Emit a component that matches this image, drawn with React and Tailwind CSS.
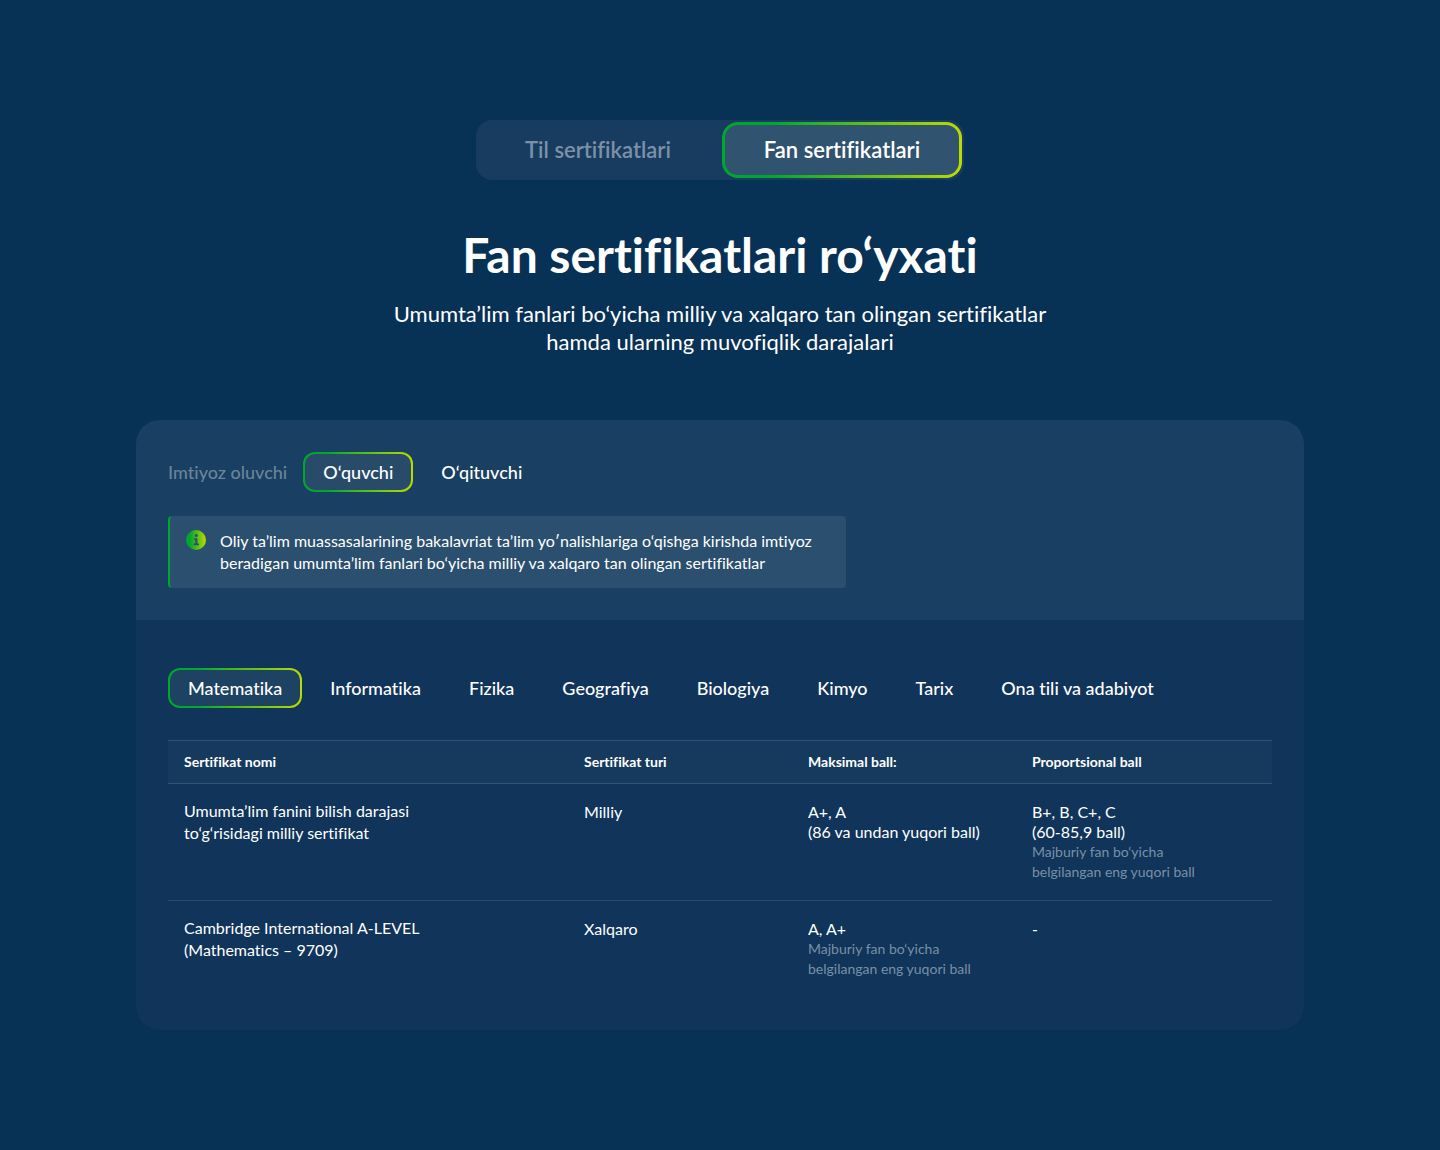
import { useState } from "react";

const kinds = ["Til sertifikatlari", "Fan sertifikatlari"];
const audiences = ["O‘quvchi", "O‘qituvchi"];
const subjects = [
  "Matematika",
  "Informatika",
  "Fizika",
  "Geografiya",
  "Biologiya",
  "Kimyo",
  "Tarix",
  "Ona tili va adabiyot",
];

const note = ["Majburiy fan bo‘yicha", "belgilangan eng yuqori ball"];

const rows = [
  {
    name: ["Umumta’lim fanini bilish darajasi", "to‘g‘risidagi milliy sertifikat"],
    type: "Milliy",
    max: { lines: ["A+, A", "(86 va undan yuqori ball)"], note: [] },
    prop: { lines: ["B+, B, C+, C", "(60-85,9 ball)"], note },
  },
  {
    name: ["Cambridge International A-LEVEL", "(Mathematics – 9709)"],
    type: "Xalqaro",
    max: { lines: ["A, A+"], note },
    prop: { lines: ["-"], note: [] },
  },
];

function Pill({ active, fill, onClick, children }) {
  const look = active
    ? `border-transparent ${fill}`
    : "border-transparent";
  return (
    <button
      type="button"
      aria-pressed={active}
      onClick={onClick}
      className={`h-10 rounded-xl border-2 px-[18px] text-lg font-medium leading-5 whitespace-nowrap ${look}`}
    >
      {children}
    </button>
  );
}

function Score({ value }) {
  return (
    <td className="px-4 py-[18px] align-top">
      {value.lines.map((line) => (
        <div key={line} className="text-base leading-5">{line}</div>
      ))}
      {value.note.map((line) => (
        <div key={line} className="text-sm leading-5 text-[#7890a6]">{line}</div>
      ))}
    </td>
  );
}

export default function App() {
  const [kind, setKind] = useState(kinds[1]);
  const [audience, setAudience] = useState(audiences[0]);
  const [subject, setSubject] = useState(subjects[0]);

  return (
    <main className="min-h-screen bg-[#073155] px-6 py-[120px] font-['Lato','Open_Sans',sans-serif] text-white antialiased [font-variant-ligatures:none]">
      <div className="mx-auto flex max-w-[1168px] flex-col items-center">
        <div className="flex gap-1 rounded-2xl bg-[#183c60] p-0.5">
          {kinds.map((item) => (
            <button
              key={item}
              type="button"
              aria-pressed={item === kind}
              onClick={() => setKind(item)}
              className={`h-14 w-60 rounded-2xl border-[3px] border-transparent text-[22px] leading-7 font-semibold ${
                item === kind
                  ? "[background:linear-gradient(#30536f,#30536f)_padding-box,linear-gradient(90deg,#00a62f_20%,#bcdb00)_border-box]"
                  : "text-[#7c91a7]"
              }`}
            >
              {item}
            </button>
          ))}
        </div>

        <h1 className="mt-12 text-center text-5xl leading-[54px] font-bold">Fan sertifikatlari ro‘yxati</h1>
        <p className="mt-[18px] text-center text-[22px] leading-7">
          Umumta’lim fanlari bo‘yicha milliy va xalqaro tan olingan sertifikatlar
          <br />
          hamda ularning muvofiqlik darajalari
        </p>

        <section className="mt-16 w-full overflow-hidden rounded-3xl bg-[#10345a]">
          <div className="bg-[#193f62] p-8">
            <div className="flex items-center gap-2">
              <span className="mr-2 text-lg leading-5 font-medium text-[#6b849b]">Imtiyoz oluvchi</span>
              {audiences.map((item) => (
                <Pill
                  key={item}
                  active={item === audience}
                  onClick={() => setAudience(item)}
                  fill="[background:linear-gradient(#284b6a,#284b6a)_padding-box,linear-gradient(90deg,#00a62f_20%,#bcdb00)_border-box]"
                >
                  {item}
                </Pill>
              ))}
            </div>
            <div className="mt-6 flex w-[678px] max-w-full gap-3.5 rounded border-l-2 border-[#00a62f] bg-[#2b4f6e] py-3.5 pr-5 pl-4">
              <svg viewBox="0 0 20 20" className="size-5 shrink-0" aria-hidden="true">
                <defs>
                  <linearGradient id="info" x1="0" x2="1" y1="0" y2="0">
                    <stop offset="0.2" stopColor="#00a62f" />
                    <stop offset="1" stopColor="#bcdb00" />
                  </linearGradient>
                </defs>
                <circle cx="10" cy="10" r="10" fill="url(#info)" />
                <circle cx="10.3" cy="5.4" r="1.5" fill="#2b4f6e" />
                <path d="M8 8.2h3.4v5.2h1.5v1.8H7.6v-1.8h1.7V9.9H8z" fill="#2b4f6e" />
              </svg>
              <p className="text-base leading-[22px]">
                Oliy ta’lim muassasalarining bakalavriat ta’lim yo′nalishlariga o‘qishga kirishda imtiyoz
                beradigan umumta’lim fanlari bo‘yicha milliy va xalqaro tan olingan sertifikatlar
              </p>
            </div>
          </div>

          <div className="px-8 pt-12 pb-[33px]">
            <div className="flex flex-wrap gap-2">
              {subjects.map((item) => (
                <Pill
                  key={item}
                  active={item === subject}
                  onClick={() => setSubject(item)}
                  fill="[background:linear-gradient(#1e4262,#1e4262)_padding-box,linear-gradient(90deg,#00a62f_20%,#bcdb00)_border-box]"
                >
                  {item}
                </Pill>
              ))}
            </div>

            <table className="mt-8 w-full table-fixed border-separate border-spacing-0 text-left">
              <colgroup>
                <col className="w-[400px]" />
                <col className="w-56" />
                <col className="w-56" />
                <col />
              </colgroup>
              <thead>
                <tr className="bg-[#153a5e]">
                  {["Sertifikat nomi", "Sertifikat turi", "Maksimal ball:", "Proportsional ball"].map((head) => (
                    <th key={head} scope="col" className="h-11 border-y border-[#315375] px-4 text-sm leading-5 font-bold">
                      {head}
                    </th>
                  ))}
                </tr>
              </thead>
              <tbody className="[&>tr:not(:last-child)>td]:border-b [&>tr>td]:border-[#284b6c]">
                {rows.map((row) => (
                  <tr key={row.type}>
                    <td className="px-4 pt-4 pb-[18px] align-top text-base leading-[22px]">
                      {row.name.map((line) => (
                        <div key={line}>{line}</div>
                      ))}
                    </td>
                    <td className="px-4 py-[18px] align-top text-base leading-5">{row.type}</td>
                    <Score value={row.max} />
                    <Score value={row.prop} />
                  </tr>
                ))}
              </tbody>
            </table>
          </div>
        </section>
      </div>
    </main>
  );
}
